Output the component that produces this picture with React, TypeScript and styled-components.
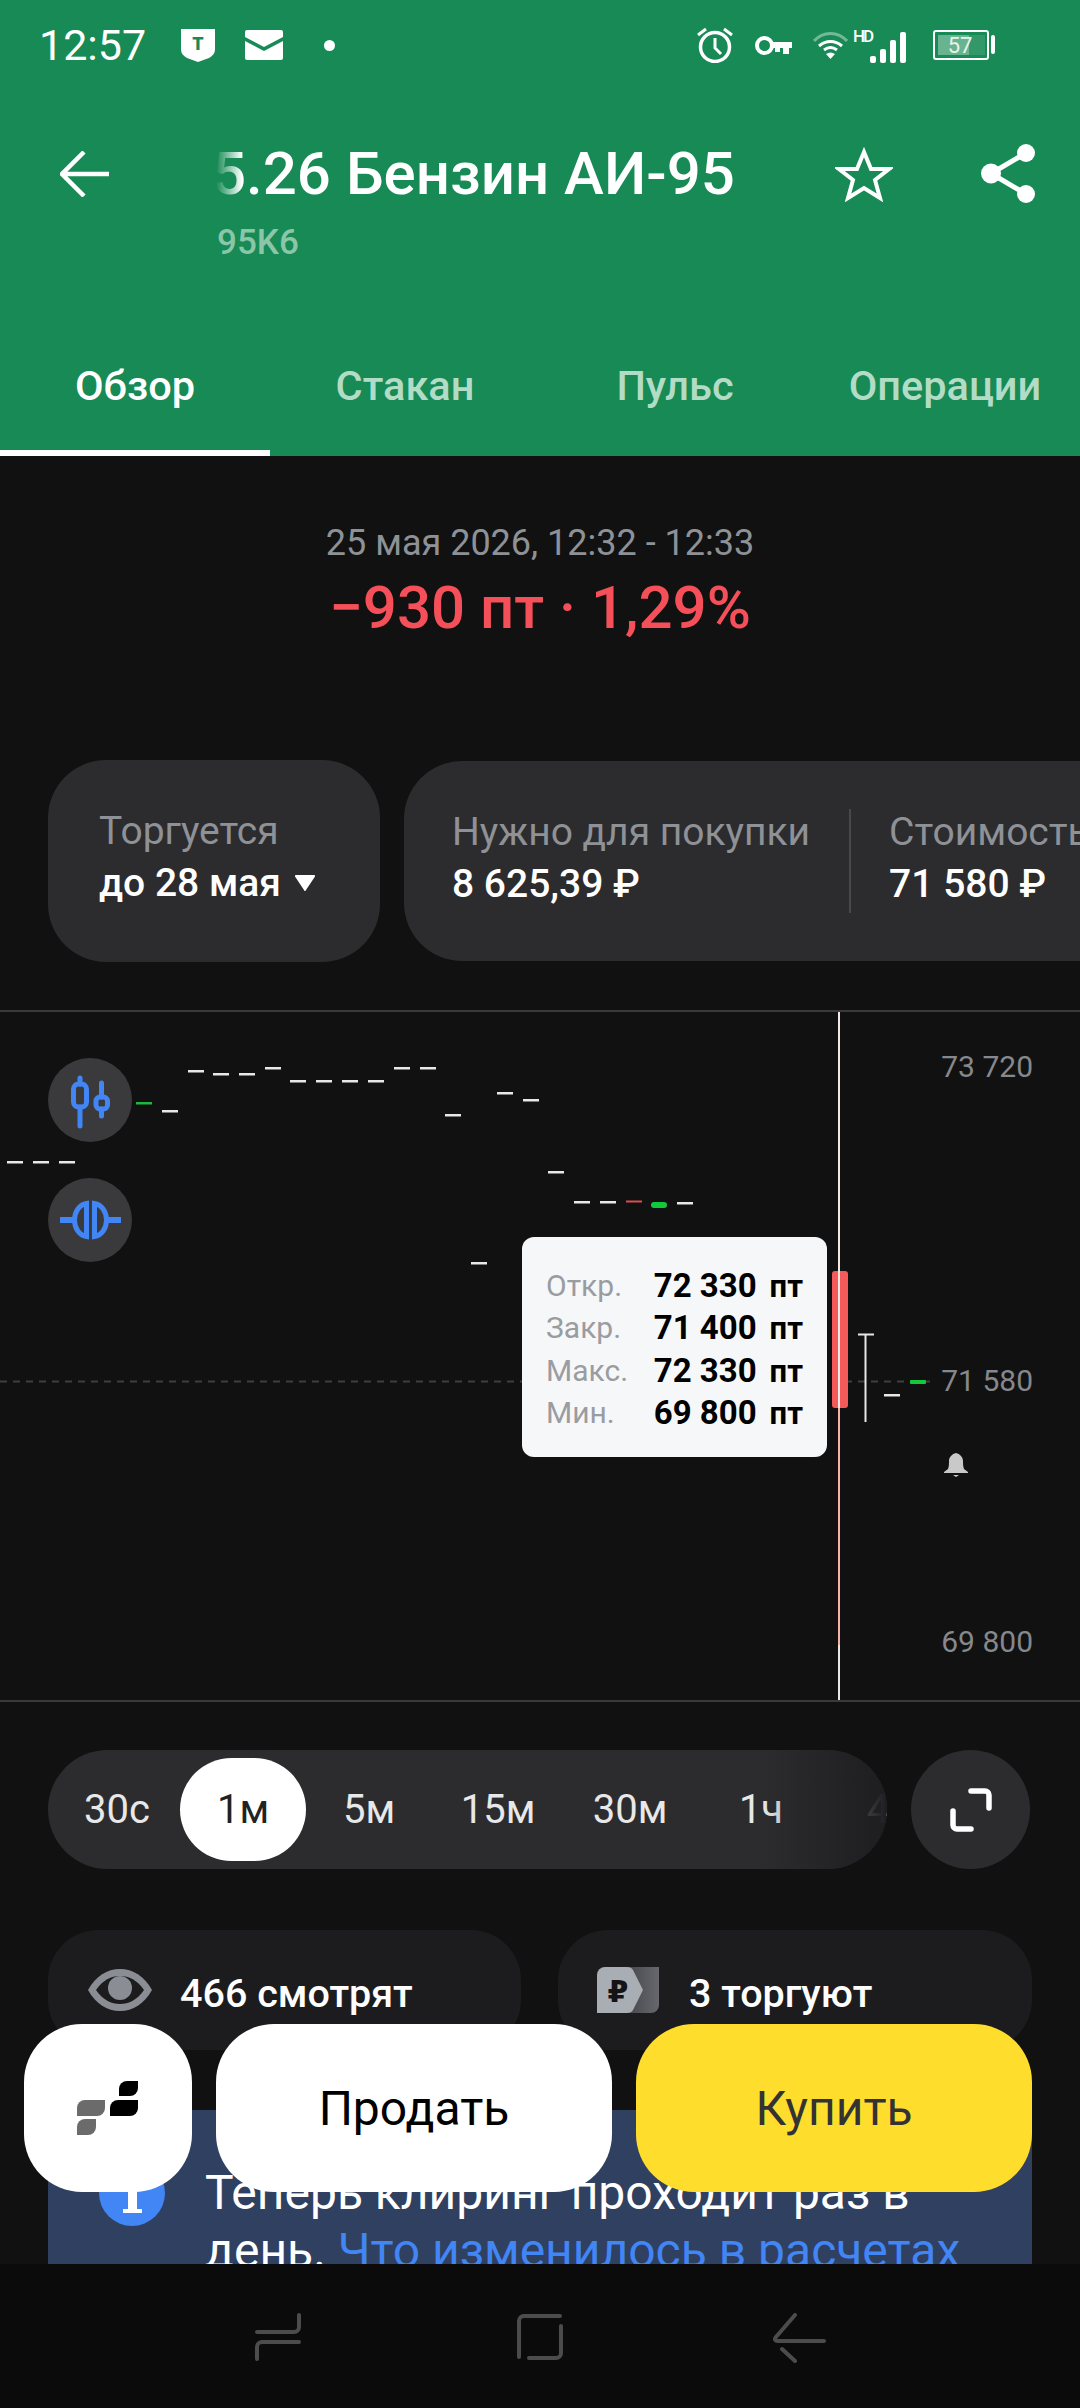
import React from 'react';
import styled, { createGlobalStyle } from 'styled-components';

const GlobalStyle = createGlobalStyle`
  html, body {
    margin: 0;
    padding: 0;
    background: #111112;
  }
  * {
    box-sizing: border-box;
  }
`;

const WHITE_TICKS = [
  [7, 1161], [33, 1161], [59, 1161], [162, 1110], [188, 1070], [213, 1073], [239, 1073], [265, 1067],
  [290, 1080], [316, 1080], [342, 1080], [368, 1080], [394, 1067], [420, 1067], [445, 1114], [471, 1262],
  [497, 1092], [523, 1099], [548, 1171], [574, 1201], [600, 1201], [677, 1202], [884, 1394],
];

const OHLC = [
  { label: 'Откр.', value: '72 330' },
  { label: 'Закр.', value: '71 400' },
  { label: 'Макс.', value: '72 330' },
  { label: 'Мин.', value: '69 800' },
];

const PERIODS = [
  { label: '30с', width: 126 },
  { label: '1м', width: 126, active: true },
  { label: '5м', width: 126 },
  { label: '15м', width: 132 },
  { label: '30м', width: 132 },
  { label: '1ч', width: 130 },
  { label: '4ч', width: 126 },
];

const App = (): JSX.Element => {
  return (
    <Page>
      <GlobalStyle />
      <Content>
        <Header>
          <StatusBar>
            <StatusGroup>
              <Clock>12:57</Clock>
              <StatusIcon $left={35} width="34" height="34" viewBox="0 0 34 34">
                <path d="M0 1h34v20c0 5-3 7-6 9l-11 4-11-4c-3-2-6-4-6-9z" fill="#fff" />
                <text x="17" y="22" textAnchor="middle" fontFamily="Roboto" fontWeight="900" fontSize="18" fill="#178a55">T</text>
              </StatusIcon>
              <StatusIcon $left={30} width="38" height="30" viewBox="0 0 38 30">
                <path d="M2 0h34a2 2 0 0 1 2 2v5L19 17 0 7V2a2 2 0 0 1 2-2z" fill="#fff" />
                <path d="M0 11l19 10 19-10v17a2 2 0 0 1-2 2H2a2 2 0 0 1-2-2z" fill="#fff" />
              </StatusIcon>
              <StatusDot />
            </StatusGroup>
            <StatusGroup>
              <StatusIcon width="36" height="36" viewBox="0 0 36 36">
                <circle cx="18" cy="20" r="14.500" fill="none" stroke="#fff" strokeWidth="3.500" />
                <path d="M18 11v10l6 6M1 8l8-6M35 8l-8-6" fill="none" stroke="#fff" strokeWidth="3" />
              </StatusIcon>
              <StatusIcon $left={22} width="37" height="19" viewBox="0 0 37 19">
                <circle cx="9.500" cy="9.500" r="7.500" fill="none" stroke="#fff" strokeWidth="4" />
                <path d="M17 6h20v6h-3v6h-6v-6h-3v4h-5v-4h-3z" fill="#fff" />
              </StatusIcon>
              <StatusIcon $left={21} width="35" height="28" viewBox="0 0 35 28">
                <path d="M1 10C10 0 25 0 34 10" fill="none" stroke="#fff" strokeOpacity="0.4" strokeWidth="3" />
                <path d="M6 15c7-6 16-6 23 0M11 19c4-3 9-3 13 0" fill="none" stroke="#fff" strokeWidth="3" />
                <path d="M13 23c3-2 6-2 9 0l-4.500 5z" fill="#fff" />
              </StatusIcon>
              <StatusIcon width="58" height="36" viewBox="0 0 58 36">
                <text x="5" y="15" fontFamily="Roboto" fontWeight="500" fontSize="17" fill="#fff" textLength="21">HD</text>
                <rect x="22" y="29" width="6" height="7" rx="2" fill="#fff" />
                <rect x="32" y="22" width="6" height="14" rx="2" fill="#fff" />
                <rect x="42" y="13" width="6" height="23" rx="2" fill="#fff" />
                <rect x="52" y="5" width="6" height="31" rx="2" fill="#fff" />
              </StatusIcon>
              <StatusIcon $left={27} width="62" height="30" viewBox="0 0 62 30">
                <rect x="1" y="1" width="54" height="28" rx="2" fill="none" stroke="#fff" strokeWidth="2" />
                <rect x="5" y="5" width="31" height="20" fill="#fff" fillOpacity="0.35" />
                <rect x="36" y="5" width="16" height="20" fill="#fff" fillOpacity="0.12" />
                <rect x="58" y="5" width="4" height="19" rx="2" fill="#fff" />
                <text x="27" y="23" textAnchor="middle" fontFamily="Roboto" fontSize="22" fill="#e8f3ec">57</text>
              </StatusIcon>
            </StatusGroup>
          </StatusBar>

          <TitleBar>
            <BackIcon width="49" height="46" viewBox="0 0 49 46">
              <path d="M49 23H3M24 1L2 23l22 22" fill="none" stroke="#fff" strokeWidth="4.500" />
            </BackIcon>
            <TitleBlock>
              <Title>5.26 Бензин АИ-95</Title>
              <Ticker>95K6</Ticker>
            </TitleBlock>
            <StarIcon width="58" height="55" viewBox="0 0 58 55">
              <path d="M29 5l7 17h18L40 33l5 18-16-10-16 10 5-18L4 22h18z" fill="none" stroke="#fff" strokeWidth="4" strokeLinejoin="miter" />
            </StarIcon>
            <ShareIcon width="54" height="59" viewBox="0 0 54 59">
              <circle cx="45" cy="9" r="9" fill="#fff" />
              <circle cx="45" cy="50" r="9" fill="#fff" />
              <circle cx="10" cy="29.500" r="10" fill="#fff" />
              <path d="M45 9L10 29.500 45 50" fill="none" stroke="#fff" strokeWidth="5" />
            </ShareIcon>
          </TitleBar>

          <Tabs>
            <Tab $active>Обзор</Tab>
            <Tab>Стакан</Tab>
            <Tab>Пульс</Tab>
            <Tab>Операции</Tab>
          </Tabs>
        </Header>

        <Summary>
          <DateLine>25 мая 2026, 12:32 - 12:33</DateLine>
          <Change>−930 пт · 1,29%</Change>
        </Summary>

        <InfoCards>
          <TradeCard>
            <CardLabel>Торгуется</CardLabel>
            <CardValue>
              до 28 мая
              <Caret width="20" height="16" viewBox="0 0 20 16">
                <path d="M1 0h18a1 1 0 0 1 1 1.500L11 15a1 1 0 0 1-2 0L0 1.500A1 1 0 0 1 1 0z" fill="#fff" />
              </Caret>
            </CardValue>
          </TradeCard>
          <PriceCard>
            <PriceColumn>
              <CardLabel>Нужно для покупки</CardLabel>
              <CardValue>8 625,39 ₽</CardValue>
            </PriceColumn>
            <PriceDivider />
            <PriceColumn>
              <CardLabel>Стоимость</CardLabel>
              <CardValue>71 580 ₽</CardValue>
            </PriceColumn>
          </PriceCard>
        </InfoCards>

        <Chart>
          <ChartCanvas viewBox="0 1012 1080 688" width="1080" height="688">
            <line x1="0" y1="1381.500" x2="930" y2="1381.500" stroke="#3d3e40" strokeWidth="2" strokeDasharray="7 6" />
            {WHITE_TICKS.map(([x, y]) => (
              <rect key={`${x}-${y}`} x={x} y={y} width="16" height="2.500" fill="#e8e8e8" />
            ))}
            <rect x="136" y="1102" width="16" height="2.500" fill="#1fb53f" />
            <rect x="626" y="1200.500" width="16" height="2" fill="#d8504c" />
            <rect x="651" y="1202" width="16" height="6" rx="3" fill="#12c83c" />
            <rect x="910" y="1380" width="16" height="4" rx="1" fill="#12c83c" />
            <rect x="832" y="1271" width="16" height="137" rx="3" fill="#f55a5a" />
            <line x1="839" y1="1012" x2="839" y2="1408" stroke="#f3e9e6" strokeWidth="2" />
            <line x1="839" y1="1408" x2="839" y2="1645" stroke="#f6b3a9" strokeWidth="2" />
            <line x1="839" y1="1645" x2="839" y2="1700" stroke="#e8e8e8" strokeWidth="2" />
            <path d="M858 1334.500h16M865.500 1334v88" fill="none" stroke="#e8e8e8" strokeWidth="2" />
            <path d="M948 1469c1-3 1-5 1-8 0-4 3-7 7-8 4 1 7 4 7 8 0 3 0 5 1 8l4 3v1h-24v-1zM953 1475h6l-3 2z" fill="#c9c9c9" />
          </ChartCanvas>

          <ToolButton $top={46}>
            <svg width="84" height="84" viewBox="48 1058 84 84">
              <rect x="73.500" y="1084" width="13" height="23" rx="5" fill="none" stroke="#4285f4" strokeWidth="5" />
              <path d="M80 1078v6M80 1107v19" fill="none" stroke="#4285f4" strokeWidth="5" strokeLinecap="round" />
              <rect x="96" y="1097" width="11.500" height="12" rx="4" fill="none" stroke="#4285f4" strokeWidth="5" />
              <path d="M101.500 1083v14M101.500 1109v7" fill="none" stroke="#4285f4" strokeWidth="5" strokeLinecap="round" />
            </svg>
          </ToolButton>
          <ToolButton $top={166}>
            <svg width="84" height="84" viewBox="48 1178 84 84">
              <path d="M60 1220h13M108 1220h13" fill="none" stroke="#4285f4" strokeWidth="6" />
              <path d="M86.500 1203.500v33c-7-1-12-8-12-16.500s5-15.500 12-16.500zM94.500 1203.500v33c7-1 12-8 12-16.500s-5-15.500-12-16.500z" fill="none" stroke="#4285f4" strokeWidth="5" />
            </svg>
          </ToolButton>

          <AxisLabel $top={35}>73 720</AxisLabel>
          <AxisLabel $top={349}>71 580</AxisLabel>
          <AxisLabel $top={610}>69 800</AxisLabel>

          <Tooltip>
            {OHLC.map((row) => (
              <React.Fragment key={row.label}>
                <TooltipLabel>{row.label}</TooltipLabel>
                <TooltipValue>
                  {row.value}
                  <TooltipUnit>пт</TooltipUnit>
                </TooltipValue>
              </React.Fragment>
            ))}
          </Tooltip>
        </Chart>

        <Periods>
          <PeriodPill>
            {PERIODS.map((period) => (
              <Period key={period.label} $width={period.width} $active={period.active}>
                {period.label}
              </Period>
            ))}
          </PeriodPill>
          <ExpandButton>
            <svg width="42" height="44" viewBox="0 0 42 44">
              <path d="M21 3h14a4 4 0 0 1 4 4v13M3 23v14a4 4 0 0 0 4 4h14" fill="none" stroke="#fff" strokeWidth="5.500" strokeLinecap="round" />
            </svg>
          </ExpandButton>
        </Periods>

        <Social>
          <SocialCard>
            <EyeIcon width="66" height="44" viewBox="0 0 66 44">
              <path d="M1 22C9 8 20 1 33 1s24 7 32 21c-8 14-19 21-32 21S9 36 1 22z" fill="#8a8d93" />
              <path d="M9 22C16 12 24 8 33 8s17 4 24 14c-7 10-15 14-24 14S16 32 9 22z" fill="#1c1c1e" />
              <circle cx="33" cy="20" r="12" fill="#8a8d93" />
            </EyeIcon>
            <SocialText>466 смотрят</SocialText>
          </SocialCard>
          <SocialCard $gap={30}>
            <svg width="62" height="46" viewBox="0 0 62 46">
              <defs>
                <linearGradient id="rubleTail" x1="0" x2="1" y1="0" y2="0">
                  <stop offset="0" stopColor="#3c3d42" />
                  <stop offset="1" stopColor="#66686d" />
                </linearGradient>
              </defs>
              <path d="M20 0h42v38a8 8 0 0 1-8 8H20z" fill="url(#rubleTail)" />
              <path d="M8 0h22c3 0 5 1 6 3l10 20-10 20c-1 2-3 3-6 3H0V8a8 8 0 0 1 8-8z" fill="#a9adb4" />
              <text x="21" y="35" textAnchor="middle" fontFamily="DejaVu Sans" fontWeight="700" fontSize="30" fill="#141416">₽</text>
            </svg>
            <SocialText>3 торгуют</SocialText>
          </SocialCard>
        </Social>

        <Notice>
          <NoticeIcon>
            <NoticeStem />
          </NoticeIcon>
          <NoticeText>
            Теперь клиринг проходит раз в день. <NoticeLink>Что изменилось в расчетах</NoticeLink>
          </NoticeText>
        </Notice>
      </Content>

      <ActionBar>
        <LogoButton>
          <svg width="62" height="55" viewBox="0 0 62 55">
            <path d="M0 35V27a8 8 0 0 1 8-8h20v8a8 8 0 0 1-8 8z" fill="#6b6b6b" />
            <path d="M0 54V46a8 8 0 0 1 8-8h11v8a8 8 0 0 1-8 8z" fill="#6b6b6b" />
            <path d="M33 35V27a8 8 0 0 1 8-8h20v8a8 8 0 0 1-8 8z" fill="#000" />
            <path d="M42 15V8a8 8 0 0 1 8-8h11v7a8 8 0 0 1-8 8z" fill="#000" />
          </svg>
        </LogoButton>
        <TradeButton $buy={false}>Продать</TradeButton>
        <TradeButton $buy>Купить</TradeButton>
      </ActionBar>

      <NavBar>
        <svg width="46" height="48" viewBox="0 0 46 48">
          <path d="M44 2v12a5 5 0 0 1-5 5H2M44 29H7a5 5 0 0 0-5 5v12" fill="none" stroke="#4c4c4c" strokeWidth="4" strokeLinecap="round" />
        </svg>
        <svg width="46" height="48" viewBox="0 0 46 48">
          <path d="M43 3H7a5 5 0 0 0-5 5v36M12 45h27a5 5 0 0 0 5-5V13" fill="none" stroke="#4c4c4c" strokeWidth="4" strokeLinecap="round" />
        </svg>
        <NavBack width="54" height="50" viewBox="0 0 54 50">
          <path d="M23 2L4 24c-2 2-1 4 2 4h46M10 36l13 12" fill="none" stroke="#4c4c4c" strokeWidth="4" strokeLinecap="round" />
        </NavBack>
      </NavBar>
    </Page>
  );
};

export default App;

const Page = styled.div`
  position: relative;
  width: 1080px;
  height: 2408px;
  display: flex;
  flex-direction: column;
  overflow: hidden;
  background: #111112;
  font-family: Roboto, "Noto Sans", sans-serif;
  color: #fff;
`;

const Content = styled.div`
  height: 2264px;
  overflow: hidden;
`;

const Header = styled.header`
  height: 456px;
  background: #178a55;
`;

const StatusBar = styled.div`
  height: 90px;
  padding: 0 85px 0 39px;
  display: flex;
  align-items: center;
  justify-content: space-between;
`;

const StatusGroup = styled.div`
  display: flex;
  align-items: center;
`;

const Clock = styled.span`
  font-size: 43px;
  line-height: 40px;
`;

const StatusIcon = styled.svg<{ $left?: number }>`
  margin-left: ${(p) => p.$left ?? 0}px;
  display: block;
`;

const StatusDot = styled.span`
  width: 11px;
  height: 11px;
  margin-left: 41px;
  border-radius: 50%;
  background: #fff;
`;

const TitleBar = styled.div`
  height: 220px;
  padding-left: 60px;
  display: flex;
  align-items: flex-start;
`;

const BackIcon = styled.svg`
  margin-top: 61px;
  flex: none;
`;

const TitleBlock = styled.div`
  width: 560px;
  margin-left: 108px;
  padding-top: 52px;
  flex: none;
`;

const Title = styled.div`
  margin-left: -5px;
  font-size: 60px;
  line-height: 64px;
  font-weight: 500;
  white-space: nowrap;
  mask-image: linear-gradient(to right, transparent 4px, #000 30px);
`;

const Ticker = styled.div`
  margin-top: 17px;
  font-size: 35px;
  line-height: 40px;
  font-weight: 500;
  color: #8cc6a8;
`;

const StarIcon = styled.svg`
  margin: 57px 0 0 58px;
  flex: none;
`;

const ShareIcon = styled.svg`
  margin: 54px 0 0 88px;
  flex: none;
`;

const Tabs = styled.nav`
  display: grid;
  grid-template-columns: repeat(4, 270px);
`;

const Tab = styled.div<{ $active?: boolean }>`
  height: 146px;
  padding-top: 10px;
  display: flex;
  align-items: center;
  justify-content: center;
  font-size: 41.500px;
  font-weight: 500;
  color: ${(p) => (p.$active ? '#fff' : '#b3dcc6')};
  border-bottom: 6px solid ${(p) => (p.$active ? '#fff' : 'transparent')};
`;

const Summary = styled.section`
  padding-top: 65px;
  text-align: center;
`;

const DateLine = styled.div`
  font-size: 36px;
  line-height: 44px;
  color: #8e9196;
`;

const Change = styled.div`
  margin-top: 9px;
  font-size: 60px;
  line-height: 68px;
  font-weight: 500;
  color: #f5505a;
`;

const InfoCards = styled.section`
  height: 202px;
  margin-top: 118px;
  padding-left: 48px;
  display: flex;
  align-items: center;
  gap: 24px;
  overflow: hidden;
`;

const TradeCard = styled.div`
  width: 332px;
  height: 202px;
  padding: 47px 0 0 51px;
  flex: none;
  border-radius: 58px;
  background: #2c2c2e;
`;

const PriceCard = styled.div`
  width: 900px;
  height: 200px;
  padding-left: 48px;
  flex: none;
  display: flex;
  align-items: center;
  border-radius: 58px;
  background: #2c2c2e;
`;

const PriceColumn = styled.div`
  margin-top: -6px;
`;

const PriceDivider = styled.div`
  width: 2px;
  height: 104px;
  margin: 0 38px 0 39px;
  background: #48494c;
`;

const CardLabel = styled.div`
  font-size: 39px;
  line-height: 48px;
  color: #8e9196;
  white-space: nowrap;
`;

const CardValue = styled.div`
  margin-top: 4px;
  display: flex;
  align-items: center;
  font-size: 39px;
  line-height: 48px;
  font-weight: 500;
  white-space: nowrap;
`;

const Caret = styled.svg`
  margin-left: 14px;
`;

const Chart = styled.section`
  position: relative;
  height: 692px;
  margin-top: 48px;
  border-top: 2px solid #3a3a3c;
  border-bottom: 2px solid #3a3a3c;
`;

const ChartCanvas = styled.svg`
  display: block;
`;

const ToolButton = styled.div<{ $top: number }>`
  position: absolute;
  left: 48px;
  top: ${(p) => p.$top}px;
  width: 84px;
  height: 84px;
  display: flex;
  border-radius: 50%;
  background: #3a3a3c;
`;

const AxisLabel = styled.div<{ $top: number }>`
  position: absolute;
  right: 47px;
  top: ${(p) => p.$top}px;
  font-size: 30px;
  line-height: 40px;
  color: #85888c;
`;

const Tooltip = styled.div`
  position: absolute;
  left: 522px;
  top: 225px;
  width: 305px;
  height: 220px;
  padding: 27px 24px 0;
  display: grid;
  grid-template-columns: auto 1fr;
  grid-auto-rows: 42.500px;
  align-items: center;
  border-radius: 12px;
  background: #f6f7f8;
`;

const TooltipLabel = styled.div`
  font-size: 30px;
  color: #999ca1;
`;

const TooltipValue = styled.div`
  display: flex;
  justify-content: flex-end;
  align-items: baseline;
  gap: 13px;
  font-size: 33px;
  font-weight: 700;
  color: #000;
  white-space: nowrap;
`;

const TooltipUnit = styled.span`
  font-size: 31px;
`;

const Periods = styled.section`
  margin-top: 48px;
  padding: 0 48px;
  display: flex;
  gap: 24px;
`;

const PeriodPill = styled.div`
  position: relative;
  width: 839px;
  height: 119px;
  padding-left: 6px;
  display: flex;
  align-items: center;
  overflow: hidden;
  border-radius: 60px;
  background: #2c2c2e;

  &::after {
    content: '';
    position: absolute;
    top: 0;
    right: 0;
    width: 125px;
    height: 100%;
    background: linear-gradient(to right, rgba(30, 30, 32, 0), rgba(30, 30, 32, 0.82) 80%, #1e1e20);
  }
`;

const Period = styled.div<{ $width: number; $active?: boolean }>`
  width: ${(p) => p.$width}px;
  height: 103px;
  flex: none;
  display: flex;
  align-items: center;
  justify-content: center;
  font-size: 40px;
  border-radius: 52px;
  color: ${(p) => (p.$active ? '#222' : '#e8e8e8')};
  background: ${(p) => (p.$active ? '#fff' : 'transparent')};
`;

const ExpandButton = styled.div`
  width: 119px;
  height: 119px;
  display: flex;
  align-items: center;
  justify-content: center;
  border-radius: 50%;
  background: #2c2c2e;
`;

const Social = styled.section`
  margin-top: 61px;
  padding: 0 48px;
  display: grid;
  grid-template-columns: 473px 474px;
  gap: 37px;
`;

const SocialCard = styled.div<{ $gap?: number }>`
  height: 120px;
  padding-left: 39px;
  display: flex;
  align-items: center;
  gap: ${(p) => p.$gap ?? 27}px;
  border-radius: 50px;
  background: #1c1c1e;
`;

const EyeIcon = styled.svg`
  flex: none;
`;

const SocialText = styled.span`
  margin-top: 6px;
  font-size: 39.500px;
  font-weight: 500;
`;

const Notice = styled.section`
  height: 260px;
  margin: 60px 48px 0;
  padding: 50px 40px 0 51px;
  display: flex;
  align-items: flex-start;
  gap: 40px;
  background: #2f4060;
`;

const NoticeIcon = styled.div`
  width: 66px;
  height: 66px;
  flex: none;
  display: flex;
  flex-direction: column;
  align-items: center;
  justify-content: flex-end;
  padding-bottom: 16px;
  border-radius: 50%;
  background: #4285f4;
`;

const NoticeStem = styled.div`
  width: 9px;
  height: 22px;
  background: #fff;
  box-shadow: 0 3px 0 0 #fff;
  position: relative;

  &::after {
    content: '';
    position: absolute;
    left: -5px;
    bottom: -3px;
    width: 19px;
    height: 4px;
    background: #fff;
  }
`;

const NoticeText = styled.p`
  margin: 4px 0 0;
  font-size: 48px;
  line-height: 58px;
  color: #fff;
`;

const NoticeLink = styled.span`
  color: #4285f4;
`;

const ActionBar = styled.div`
  position: absolute;
  left: 24px;
  top: 2024px;
  display: flex;
  gap: 24px;
`;

const LogoButton = styled.div`
  width: 168px;
  height: 168px;
  display: flex;
  align-items: center;
  justify-content: center;
  border-radius: 58px;
  background: #fff;
`;

const TradeButton = styled.div<{ $buy: boolean }>`
  width: 396px;
  height: 168px;
  display: flex;
  align-items: center;
  justify-content: center;
  font-size: 48px;
  border-radius: 58px;
  color: ${(p) => (p.$buy ? '#333' : '#000')};
  background: ${(p) => (p.$buy ? '#ffdd2d' : '#fff')};
`;

const NavBar = styled.nav`
  height: 144px;
  padding: 49px 0 0 255px;
  display: flex;
  align-items: flex-start;
  gap: 216px;
  background: #0b0b0b;
`;

const NavBack = styled.svg`
  margin-left: -7px;
`;
